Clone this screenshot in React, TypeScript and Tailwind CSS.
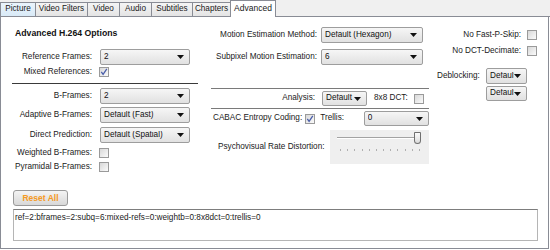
import React from "react";

const Arrow = () => (
  <svg width="7" height="4" viewBox="0 0 7 4" className="shrink-0">
    <path d="M0 0h7L3.5 4z" fill="#111" />
  </svg>
);

function Select({ value, className }: { value: string; className: string }) {
  return (
    <div
      className={`flex items-center overflow-hidden rounded-[2px] border border-[#9d9d9d] bg-gradient-to-b from-[#f6f6f6] to-[#e1e1e1] pl-[3px] pr-[5px] ${className}`}
    >
      <span className="min-w-0 flex-1 overflow-hidden whitespace-nowrap text-[#111]">{value}</span>
      <Arrow />
    </div>
  );
}

function Check({ checked }: { checked?: boolean }) {
  return (
    <div className="flex h-[10px] w-[10px] shrink-0 items-center justify-center border border-[#9a9a9a] bg-gradient-to-br from-[#d8d8d8] to-[#fbfbfb]">
      {checked && (
        <svg width="8" height="8" viewBox="0 0 8 8">
          <path d="M1.3 3.8 L3.1 6.3 L6.8 0.9" stroke="#4a5eaa" strokeWidth="1.3" fill="none" />
        </svg>
      )}
    </div>
  );
}

function Tab({ label, className, hover }: { label: string; className: string; hover?: boolean }) {
  return (
    <div
      className={`flex h-[15px] items-center justify-center border-t border-l border-b border-[#898c95] ${
        hover ? "bg-gradient-to-b from-[#eaf4fc] to-[#d9eaf7]" : "bg-gradient-to-b from-[#f5f5f5] to-[#e4e4e4]"
      } ${className}`}
    >
      {label}
    </div>
  );
}

export default function App() {
  const ticks = Array.from({ length: 12 });
  return (
    <div className="h-[250px] w-[550px] whitespace-nowrap bg-white font-['Liberation_Sans',Arial,sans-serif] text-[8.2px] leading-none text-[#1a1a1a]">
      {/* Tabs */}
      <div className="flex h-[17px] items-end bg-[#f0f0f0]">
        <Tab label="Picture" className="w-[35px]" hover />
        <Tab label="Video Filters" className="w-[52px]" />
        <Tab label="Video" className="w-[32px]" />
        <Tab label="Audio" className="w-[32px]" />
        <Tab label="Subtitles" className="w-[41px]" />
        <Tab label="Chapters" className="w-[38px]" />
        <div className="flex h-[17px] w-[46px] items-center justify-center border-x border-t border-[#898c95] bg-white pb-[2px] text-[8.5px]">
          Advanced
        </div>
        <div className="h-px flex-1 bg-[#898c95]" />
      </div>

      {/* Panel */}
      <div className="flex h-[232px] w-[549px] flex-col border-x border-b border-[#898c95] bg-white">
        <div className="flex h-[158px]">
          {/* Left column */}
          <div className="ml-[11px] flex w-[186px] flex-col">
            <div className="mt-[10px] flex h-[12px] items-center pl-[3px] text-[8.7px] font-bold text-[#111]">
              Advanced H.264 Options
            </div>
            <div className="mt-[10px] flex h-[16px] items-center">
              <span className="w-[80px] text-right">Reference Frames:</span>
              <Select value="2" className="ml-[8px] h-[16px] w-[90px]" />
            </div>
            <div className="mt-[1px] flex h-[12px] items-center">
              <span className="w-[80px] text-right">Mixed References:</span>
              <span className="ml-[7px]">
                <Check checked />
              </span>
            </div>
            <div className="mt-[5px] h-px w-[186px] bg-[#3a3a3a]" />
            <div className="mt-[4px] flex h-[16px] items-center">
              <span className="w-[80px] text-right">B-Frames:</span>
              <Select value="2" className="ml-[8px] h-[16px] w-[90px]" />
            </div>
            <div className="mt-[3px] flex h-[16px] items-center">
              <span className="w-[80px] text-right">Adaptive B-Frames:</span>
              <Select value="Default (Fast)" className="ml-[8px] h-[16px] w-[90px]" />
            </div>
            <div className="mt-[4px] flex h-[16px] items-center">
              <span className="w-[80px] text-right">Direct Prediction:</span>
              <Select value="Default (Spatial)" className="ml-[8px] h-[16px] w-[90px]" />
            </div>
            <div className="mt-[4px] flex h-[12px] items-center">
              <span className="w-[80px] text-right">Weighted B-Frames:</span>
              <span className="ml-[7px]">
                <Check />
              </span>
            </div>
            <div className="mt-[2px] flex h-[12px] items-center">
              <span className="w-[80px] text-right">Pyramidal B-Frames:</span>
              <span className="ml-[7px]">
                <Check />
              </span>
            </div>
          </div>

          {/* Middle column */}
          <div className="ml-[13px] flex w-[218px] flex-col">
            <div className="mt-[10px] flex h-[16px] items-center">
              <span className="w-[106px] text-right">Motion Estimation Method:</span>
              <Select value="Default (Hexagon)" className="ml-[4px] h-[16px] w-[102px]" />
            </div>
            <div className="mt-[6px] flex h-[16px] items-center">
              <span className="w-[106px] text-right">Subpixel Motion Estimation:</span>
              <Select value="6" className="ml-[4px] h-[16px] w-[102px]" />
            </div>
            <div className="mt-[23px] h-px w-[218px] bg-[#7a7a7a]" />
            <div className="mt-[2px] flex h-[15px] items-center">
              <span className="w-[104px] text-right">Analysis:</span>
              <Select value="Default (" className="ml-[7px] h-[15px] w-[45px]" />
              <span className="ml-[7px]">8x8 DCT:</span>
              <span className="ml-[6px]">
                <Check />
              </span>
            </div>
            <div className="mt-[2px] h-px w-[218px] bg-[#7a7a7a]" />
            <div className="mt-[2px] flex h-[15px] items-center pl-[2px]">
              <span>CABAC Entropy Coding:</span>
              <span className="ml-[3px]">
                <Check checked />
              </span>
              <span className="ml-[5px] w-[44px]">Trellis:</span>
              <Select value="0" className="h-[15px] w-[66px]" />
            </div>
            <div className="mt-[4px] flex h-[34px] items-center">
              <span className="w-[119px] pl-[7px]">Psychovisual Rate Distortion:</span>
              <div className="relative h-[34px] w-[99px] bg-[#efefef]">
                <div className="absolute left-[7px] top-[7px] h-[2px] w-[84px] border-t border-[#a3a3a3] bg-white" />
                <div className="absolute left-[84px] top-[2px] h-[12px] w-[7px] rounded-b-[4px] rounded-t-[1px] border border-[#6f6f6f] bg-gradient-to-b from-[#fafafa] to-[#dcdcdc]" />
                <div className="absolute left-[10px] top-[19px] flex w-[80px] justify-between">
                  {ticks.map((_, i) => (
                    <div key={i} className="h-[2px] w-px bg-[#b0b0b0]" />
                  ))}
                </div>
              </div>
            </div>
          </div>

          {/* Right column */}
          <div className="ml-[8px] flex w-[100px] flex-col">
            <div className="mt-[12px] flex h-[12px] items-center justify-end">
              <span>No Fast-P-Skip:</span>
              <span className="ml-[6px]">
                <Check />
              </span>
            </div>
            <div className="mt-[4px] flex h-[12px] items-center justify-end">
              <span>No DCT-Decimate:</span>
              <span className="ml-[6px]">
                <Check />
              </span>
            </div>
            <div className="mt-[11px] flex h-[16px] items-center">
              <span className="w-[49px]">Deblocking:</span>
              <Select value="Default (l" className="h-[16px] w-[41px]" />
            </div>
            <div className="mt-[2px] flex h-[15px] items-center pl-[49px]">
              <Select value="Default (l" className="h-[15px] w-[41px]" />
            </div>
          </div>
        </div>

        {/* Reset All */}
        <div className="ml-[12px] mt-[15px] flex h-[16px] w-[55px] items-center justify-center rounded-[3px] border border-[#9a9a9a] bg-gradient-to-b from-[#f4f4f4] to-[#d8d8d8] text-[8.5px] font-bold text-[#f59a23]">
          Reset All
        </div>

        {/* Text area */}
        <div className="ml-[12px] mt-[3px] h-[32px] w-[525px] border border-[#b5b5b5] border-t-[#7d7d7d] bg-white pl-[1px] pt-[4px]">
          ref=2:bframes=2:subq=6:mixed-refs=0:weightb=0:8x8dct=0:trellis=0
        </div>
      </div>
    </div>
  );
}
